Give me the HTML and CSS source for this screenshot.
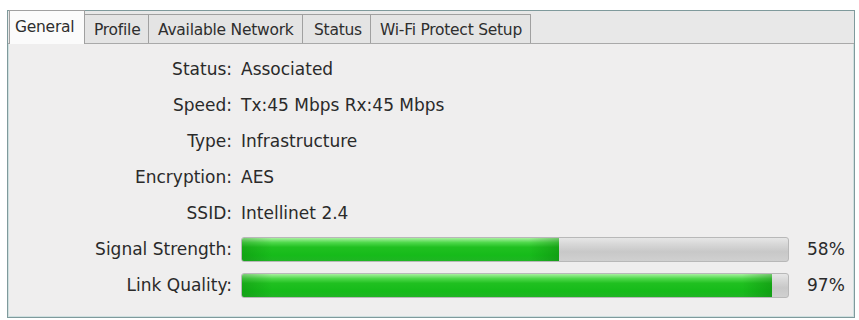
FILE: index.html
```html
<!DOCTYPE html>
<html>
<head>
<meta charset="utf-8">
<link rel="stylesheet" href="styles.css">
</head>
<body>
<div class="frame">
  <div class="tabs">
    <div class="tab active">General</div>
    <div class="tab">Profile</div>
    <div class="tab">Available Network</div>
    <div class="tab">Status</div>
    <div class="tab">Wi-Fi Protect Setup</div>
  </div>
  <div class="panel">
    <div class="label">Status:</div><div class="value">Associated</div>
    <div class="label">Speed:</div><div class="value">Tx:45 Mbps Rx:45 Mbps</div>
    <div class="label">Type:</div><div class="value">Infrastructure</div>
    <div class="label">Encryption:</div><div class="value">AES</div>
    <div class="label">SSID:</div><div class="value">Intellinet 2.4</div>
    <div class="label">Signal Strength:</div>
    <div class="meter-row"><div class="bar"><div class="fill" style="width:58%"></div></div><span class="pct">58%</span></div>
    <div class="label">Link Quality:</div>
    <div class="meter-row"><div class="bar"><div class="fill" style="width:97%"></div></div><span class="pct">97%</span></div>
  </div>
</div>
</body>
</html>
```
FILE: styles.css
```css
html, body {
  margin: 0;
  padding: 0;
  background: #ffffff;
}
body {
  padding: 10px 4px 0 7px;
  font-family: "DejaVu Sans", Verdana, sans-serif;
  color: #2a2a2a;
}
.frame {
  width: 846px;
  height: 306px;
  border: 1px solid #7f9a9c;
  box-shadow: inset 0 0 0 1px #cfe0e0;
  background: #efeeee;
  display: flex;
  flex-direction: column;
}
.tabs {
  height: 33px;
  display: flex;
  align-items: flex-end;
  background: #e8e8e8;
  border-bottom: 1px solid #a9a9a9;
  padding-left: 1px;
  box-sizing: border-box;
}
.tab {
  height: 29px;
  box-sizing: border-box;
  border: 1px solid #a0a0a0;
  border-bottom: none;
  border-left: none;
  background: #e4e4e4;
  font-size: 15.5px;
  color: #2e2e2e;
  padding: 1px 0 0 9px;
  display: flex;
  align-items: center;
  letter-spacing: -0.25px;
  white-space: nowrap;
}
.tab.active {
  height: 34px;
  margin-bottom: -1px;
  background: #fbfbfb;
  border-left: 1px solid #a0a0a0;
  width: 76px;
  padding: 0 0 2px 5px;
}
.tab:nth-child(2) { width: 64px; }
.tab:nth-child(3) { width: 154px; }
.tab:nth-child(4) { width: 68px; padding-left: 11px; }
.tab:nth-child(5) { width: 160px; }
.panel {
  display: grid;
  grid-template-columns: 224px 1fr;
  grid-auto-rows: 36px;
  column-gap: 9px;
  padding-top: 7px;
  font-size: 17px;
  align-items: center;
}
.label {
  text-align: right;
}
.meter-row {
  display: flex;
  align-items: center;
}
.bar {
  width: 548px;
  height: 25px;
  box-sizing: border-box;
  border: 1px solid #b8b8b8;
  border-radius: 3px;
  background: linear-gradient(#e6e6e6 0%, #d6d6d6 30%, #c8c8c8 60%, #d0d0d0 100%);
  overflow: hidden;
}
.fill {
  height: 100%;
  background:
    linear-gradient(90deg, rgba(0,100,0,0.25) 0, rgba(0,0,0,0) 30px, rgba(0,0,0,0) calc(100% - 30px), rgba(0,100,0,0.3) 100%),
    linear-gradient(#a8f0a0 0%, #4ed84a 20%, #20c020 40%, #16bb1a 75%, #1fb524 100%);
}
.pct {
  margin-left: 18px;
}
```
